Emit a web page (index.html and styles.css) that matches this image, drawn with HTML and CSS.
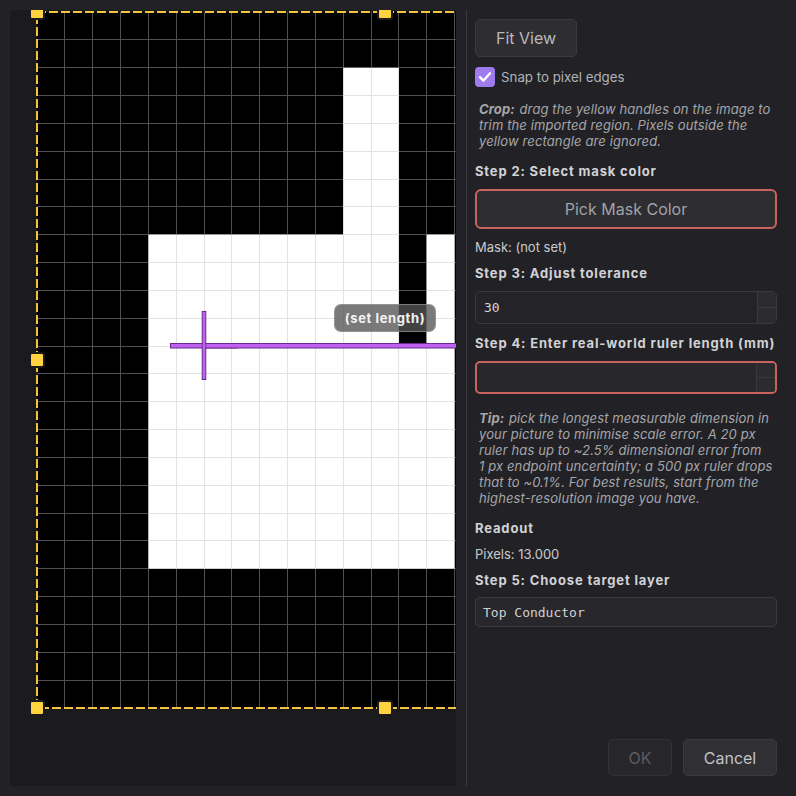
FILE: index.html
```html
<!DOCTYPE html>
<html lang="en">
<head>
  <meta charset="UTF-8" />
  <meta name="viewport" content="width=device-width, initial-scale=1.0"/>
  <title>Import Image</title>
  <link rel="stylesheet" href="styles.css">
</head>
<body>
<div class="dialog">
  <div class="canvas">
    <svg class="pixels" width="696" height="696" viewBox="0 0 25 25" shape-rendering="crispEdges">
      <defs>
        <clipPath id="white">
          <rect x="11" y="2" width="2" height="6"/>
          <rect x="4" y="8" width="9" height="12"/>
          <rect x="13" y="12" width="1" height="8"/>
          <rect x="14" y="8" width="1" height="12"/>
        </clipPath>
      </defs>
      <rect width="25" height="25" fill="#000"/>
      <path class="grid-dark" d="M1 0V25M2 0V25M3 0V25M4 0V25M5 0V25M6 0V25M7 0V25M8 0V25M9 0V25M10 0V25M11 0V25M12 0V25M13 0V25M14 0V25M15 0V25M16 0V25M17 0V25M18 0V25M19 0V25M20 0V25M21 0V25M22 0V25M23 0V25M24 0V25M0 1H25M0 2H25M0 3H25M0 4H25M0 5H25M0 6H25M0 7H25M0 8H25M0 9H25M0 10H25M0 11H25M0 12H25M0 13H25M0 14H25M0 15H25M0 16H25M0 17H25M0 18H25M0 19H25M0 20H25M0 21H25M0 22H25M0 23H25M0 24H25"/>
      <g clip-path="url(#white)">
        <rect width="25" height="25" fill="#fff"/>
        <path class="grid-light" d="M1 0V25M2 0V25M3 0V25M4 0V25M5 0V25M6 0V25M7 0V25M8 0V25M9 0V25M10 0V25M11 0V25M12 0V25M13 0V25M14 0V25M15 0V25M16 0V25M17 0V25M18 0V25M19 0V25M20 0V25M21 0V25M22 0V25M23 0V25M24 0V25M0 1H25M0 2H25M0 3H25M0 4H25M0 5H25M0 6H25M0 7H25M0 8H25M0 9H25M0 10H25M0 11H25M0 12H25M0 13H25M0 14H25M0 15H25M0 16H25M0 17H25M0 18H25M0 19H25M0 20H25M0 21H25M0 22H25M0 23H25M0 24H25"/>
      </g>
    </svg>

    <!-- crop frame, handles and ruler drawn over the image -->
    <svg class="overlay" width="446" height="776">
      <rect class="crop" x="27" y="2" width="696" height="696"/>
      <g class="handle"><rect x="19" y="-6" width="16" height="16" rx="3"/><rect class="knob" x="21" y="-4" width="12" height="12" rx="1"/></g>
      <g class="handle"><rect x="367" y="-6" width="16" height="16" rx="3"/><rect class="knob" x="369" y="-4" width="12" height="12" rx="1"/></g>
      <g class="handle"><rect x="19" y="342" width="16" height="16" rx="3"/><rect class="knob" x="21" y="344" width="12" height="12" rx="1"/></g>
      <g class="handle"><rect x="19" y="690" width="16" height="16" rx="3"/><rect class="knob" x="21" y="692" width="12" height="12" rx="1"/></g>
      <g class="handle"><rect x="367" y="690" width="16" height="16" rx="3"/><rect class="knob" x="369" y="692" width="12" height="12" rx="1"/></g>
      <g class="ruler">
        <rect x="160.5" y="333.5" width="67" height="4.5"/>
        <rect x="194" y="333.5" width="270" height="4.5"/>
        <rect x="192.2" y="301.5" width="3.6" height="68"/>
        <rect class="joint" x="192.7" y="334" width="2.6" height="3.5"/>
      </g>
    </svg>
    <div class="ruler-tip">(set length)</div>
  </div>

  <div class="divider"></div>

  <div class="panel">
    <button class="btn fit">Fit View</button>
    <label class="check">
      <span class="box"><svg width="20" height="20" viewBox="0 0 20 20"><path d="M5 10.2l3.4 3.5L15 6.3"/></svg></span>
      Snap to pixel edges
    </label>
    <p class="hint"><b>Crop:</b> drag the yellow handles on the image to trim the imported region. Pixels outside the yellow rectangle are ignored.</p>

    <h4>Step 2: Select mask color</h4>
    <button class="btn wide invalid">Pick Mask Color</button>
    <div class="text">Mask: (not set)</div>

    <h4>Step 3: Adjust tolerance</h4>
    <div class="spin"><span class="value">30</span><span class="arrows"><i></i><i></i></span></div>

    <h4 class="step4">Step 4: Enter real-world ruler length (mm)</h4>
    <div class="spin invalid"><span class="value"></span><span class="arrows"><i></i><i></i></span></div>
    <p class="hint tip"><b>Tip:</b> pick the longest measurable dimension in your picture to minimise scale error. A 20&nbsp;px ruler has up to ~2.5% dimensional error from 1&nbsp;px endpoint uncertainty; a 500&nbsp;px ruler drops that to ~0.1%. For best results, start from the highest-resolution image you have.</p>

    <h4>Readout</h4>
    <div class="text">Pixels: 13.000</div>

    <h4>Step 5: Choose target layer</h4>
    <div class="combo">Top Conductor</div>

    <div class="actions">
      <button class="btn ok" disabled>OK</button>
      <button class="btn cancel">Cancel</button>
    </div>
  </div>
</div>
</body>
</html>
```

FILE: styles.css
```css
body { margin: 0; background: #222226; font-family: 'Inter', 'Noto Sans', sans-serif; font-size: 13px; color: #cacace; }
.dialog { display: flex; height: 796px; box-sizing: border-box; padding: 10px 0 10px 10px; }

.canvas { position: relative; width: 446px; height: 776px; flex-shrink: 0; box-sizing: border-box; padding: 2px 0 0 27px; background: #1b1b1e; overflow: hidden; }
.pixels { display: block; }
.grid-dark { stroke: #505050; stroke-width: 1px; vector-effect: non-scaling-stroke; fill: none; }
.grid-light { stroke: #e3e3e3; stroke-width: 1px; vector-effect: non-scaling-stroke; fill: none; }
.overlay { position: absolute; left: 0; top: 0; }
.crop { fill: none; stroke: #f2c440; stroke-width: 2; stroke-dasharray: 9 3; }
.handle rect { fill: #1b1b1e; }
.handle .knob { fill: #ffd340; }
.ruler rect { fill: #c062f0; stroke: #6a2a8e; stroke-width: 1; }
.ruler .joint { stroke: none; }
.ruler-tip { position: absolute; left: 324px; top: 294px; width: 102px; height: 28px; box-sizing: border-box; display: flex; align-items: center; justify-content: center; background: rgba(84, 84, 84, 0.78); border: 1px solid rgba(170, 170, 170, 0.55); border-radius: 7px; color: #f2f2f2; font-weight: 700; letter-spacing: 0.6px; }

.divider { width: 1px; background: #3a3a40; margin-left: 10px; flex-shrink: 0; }

.panel { width: 302px; margin-left: 8px; padding-top: 9px; display: flex; flex-direction: column; gap: 10px; }
.btn { font-family: inherit; font-size: 16px; color: #b9b9bd; background: #2d2d32; border: 1px solid #3a3a40; border-radius: 5px; cursor: pointer; }
.fit { width: 102px; height: 38px; align-self: flex-start; }
.check { display: flex; align-items: center; gap: 6px; height: 20px; color: #b2b2b6; font-size: 13.3px; }
.box { width: 20px; height: 20px; border-radius: 4px; background: #a07bee; }
.box svg { display: block; }
.box path { fill: none; stroke: #fff; stroke-width: 2.4; stroke-linecap: round; stroke-linejoin: round; }
.hint { margin: 0; padding: 4px 0 4px 4px; line-height: 16px; font-style: italic; letter-spacing: 0.12px; color: #a6a6aa; }
.hint b { font-weight: 700; margin-right: 1px; }
.tip { padding-top: 6px; }
h4 { margin: 0; line-height: 16px; font-size: 13px; font-weight: 700; letter-spacing: 0.85px; white-space: nowrap; color: #d2d2d6; }
.step4 { margin-top: 1px; }
.text { line-height: 16px; }
.wide { height: 40px; }
.btn.invalid { border: 2px solid #c9635b; color: #a2a2a6; border-radius: 6px; }
.spin { display: flex; height: 33px; box-sizing: border-box; border: 1px solid #38383d; border-radius: 5px; background: #242428; overflow: hidden; }
.spin.invalid { border: 2px solid #c9635b; background: #28282c; }
.value { flex: 1; display: flex; align-items: center; padding-left: 8px; font-family: 'DejaVu Sans Mono', monospace; font-size: 13px; color: #d6d6d8; }
.arrows { width: 18px; display: flex; flex-direction: column; border-left: 1px solid #38383d; }
.arrows i { flex: 1; background: #2b2b30; }
.arrows i + i { border-top: 1px solid #38383d; }
.combo { height: 30px; box-sizing: border-box; display: flex; align-items: center; padding-left: 7px; margin-top: -1px; border: 1px solid #3a3a3f; border-radius: 5px; background: #28282c; font-family: 'DejaVu Sans Mono', monospace; font-size: 13px; color: #d0d0d4; }
.actions { margin-top: auto; margin-bottom: 10px; display: flex; justify-content: flex-end; gap: 11px; }
.ok { width: 64px; height: 37px; background: #27272b; border-color: #313136; color: #5c5c60; cursor: default; }
.cancel { width: 94px; height: 37px; background: #2f2f34; color: #c2c2c6; }
```
